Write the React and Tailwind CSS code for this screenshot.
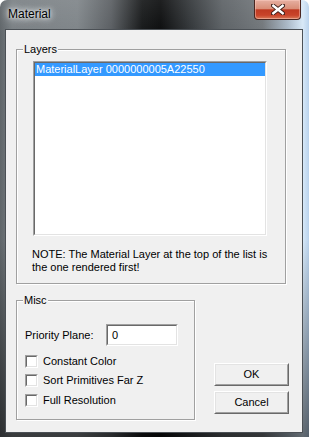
export default function App() {
  const font = { fontFamily: '"Liberation Sans", Arial, sans-serif' };
  const Check = ({ label, mt }) => (
    <div className={`flex items-center ${mt}`}>
      <div className="w-[13px] h-[13px] border-t border-l border-[#a0a0a0] border-b border-r border-b-white border-r-white">
        <div className="w-full h-full bg-white border-t border-l border-[#696969] border-b border-r border-b-[#e3e3e3] border-r-[#e3e3e3]" />
      </div>
      <span className="ml-[5px] text-[11px] leading-[13px] text-black">{label}</span>
    </div>
  );
  const Btn = ({ label, mt }) => (
    <div className={`w-[75px] h-[23px] ${mt} border-t border-l border-white border-b border-r border-b-[#696969] border-r-[#696969]`}>
      <div className="w-full h-full bg-[#f0f0f0] border-t border-l border-[#e3e3e3] border-b border-r border-b-[#a0a0a0] border-r-[#a0a0a0] flex items-center justify-center text-[11px] text-black">
        {label}
      </div>
    </div>
  );
  return (
    <div
      className="w-[309px] h-[437px] overflow-hidden rounded-t-[7px] flex flex-col relative bg-[linear-gradient(90deg,#5f6569_0%,#7a8084_4%,#7f8589_25%,#5a5e62_36%,#161819_46%,#0c0d0e_52%,#34383b_62%,#5c6165_72%,#72777b_85%,#a9b8c6_93%,#d7e8f7_98%,#b9d2ec_100%)]"
      style={font}
    >
      <div className="absolute inset-0 pointer-events-none bg-[linear-gradient(180deg,rgba(255,255,255,0.08)_0%,rgba(0,0,0,0)_8%,rgba(0,0,0,0)_55%,rgba(0,0,0,0.55)_100%)]" />
      <div className="h-[29px] flex items-start relative">
        <span className="ml-[8px] mt-[7px] text-[12px] leading-[15px] text-black [text-shadow:0_0_6px_#e8ecef,0_0_10px_#e8ecef,0_0_3px_#e8ecef]">
          Material
        </span>
        <div className="ml-auto mr-[8px] w-[47px] h-[20px] rounded-b-[4px] border border-t-0 border-[#4a2620] overflow-hidden relative bg-[linear-gradient(180deg,#e6b0a2_0%,#d98e78_45%,#bf3a22_52%,#c9442a_80%,#d87a58_100%)] shadow-[inset_0_0_0_1px_rgba(255,210,200,0.45)]">
          <svg className="absolute left-[16px] top-[4px]" width="14" height="11" viewBox="0 0 14 11">
            <path d="M2 1.5 L12 9.5 M12 1.5 L2 9.5" stroke="#3a1a14" strokeWidth="4.2" strokeLinecap="square" />
            <path d="M2.3 1.8 L11.7 9.2 M11.7 1.8 L2.3 9.2" stroke="#ffffff" strokeWidth="2.4" strokeLinecap="square" />
          </svg>
        </div>
      </div>
      <div className="ml-[5px] mr-[6px] h-[404px] border border-[#4b5055] bg-[#f0f0f0] relative flex flex-col pl-[10px] pt-[19px]">
        <div className="w-[270px] h-[235px] border border-[#a0a0a0] shadow-[1px_1px_0_#fff,inset_1px_1px_0_#fff] relative flex flex-col">
          <span className="absolute left-[6px] top-[-7px] px-[1px] bg-[#f0f0f0] text-[11px] leading-[13px] text-black">Layers</span>
          <div className="ml-[16px] mt-[11px] w-[234px] h-[175px] border-t border-l border-[#a0a0a0] border-b border-r border-b-white border-r-white">
            <div className="w-full h-full bg-white border-t border-l border-[#696969] border-b border-r border-b-[#e3e3e3] border-r-[#e3e3e3]">
              <div className="h-[13px] mt-0 bg-[#3399ff] text-white text-[11px] leading-[13px] pl-[1px]">
                MaterialLayer 0000000005A22550
              </div>
            </div>
          </div>
          <div className="ml-[15px] mt-[12px] text-[11px] leading-[13px] text-black">
            NOTE: The Material Layer at the top of the list is
            <br />
            the one rendered first!
          </div>
        </div>
        <div className="flex items-start mt-[16px]">
          <div className="w-[179px] h-[120px] border border-[#a0a0a0] shadow-[1px_1px_0_#fff,inset_1px_1px_0_#fff] relative flex flex-col pl-[8px]">
            <span className="absolute left-[6px] top-[-7px] px-[1px] bg-[#f0f0f0] text-[11px] leading-[13px] text-black">Misc</span>
            <div className="flex items-center mt-[23px]">
              <span className="w-[81px] text-[11px] leading-[13px] text-black">Priority Plane:</span>
              <div className="w-[72px] h-[22px] border-t border-l border-[#a0a0a0] border-b border-r border-b-white border-r-white">
                <div className="w-full h-full bg-white border-t border-l border-[#696969] border-b border-r border-b-[#e3e3e3] border-r-[#e3e3e3] flex items-center pl-[4px] text-[11px] text-black">
                  0
                </div>
              </div>
            </div>
            <Check label="Constant Color" mt="mt-[9px]" />
            <Check label="Sort Primitives Far Z" mt="mt-[6px]" />
            <Check label="Full Resolution" mt="mt-[7px]" />
          </div>
          <div className="flex flex-col ml-[19px] mt-[63px]">
            <Btn label="OK" mt="mt-0" />
            <Btn label="Cancel" mt="mt-[5px]" />
          </div>
        </div>
      </div>
    </div>
  );
}
